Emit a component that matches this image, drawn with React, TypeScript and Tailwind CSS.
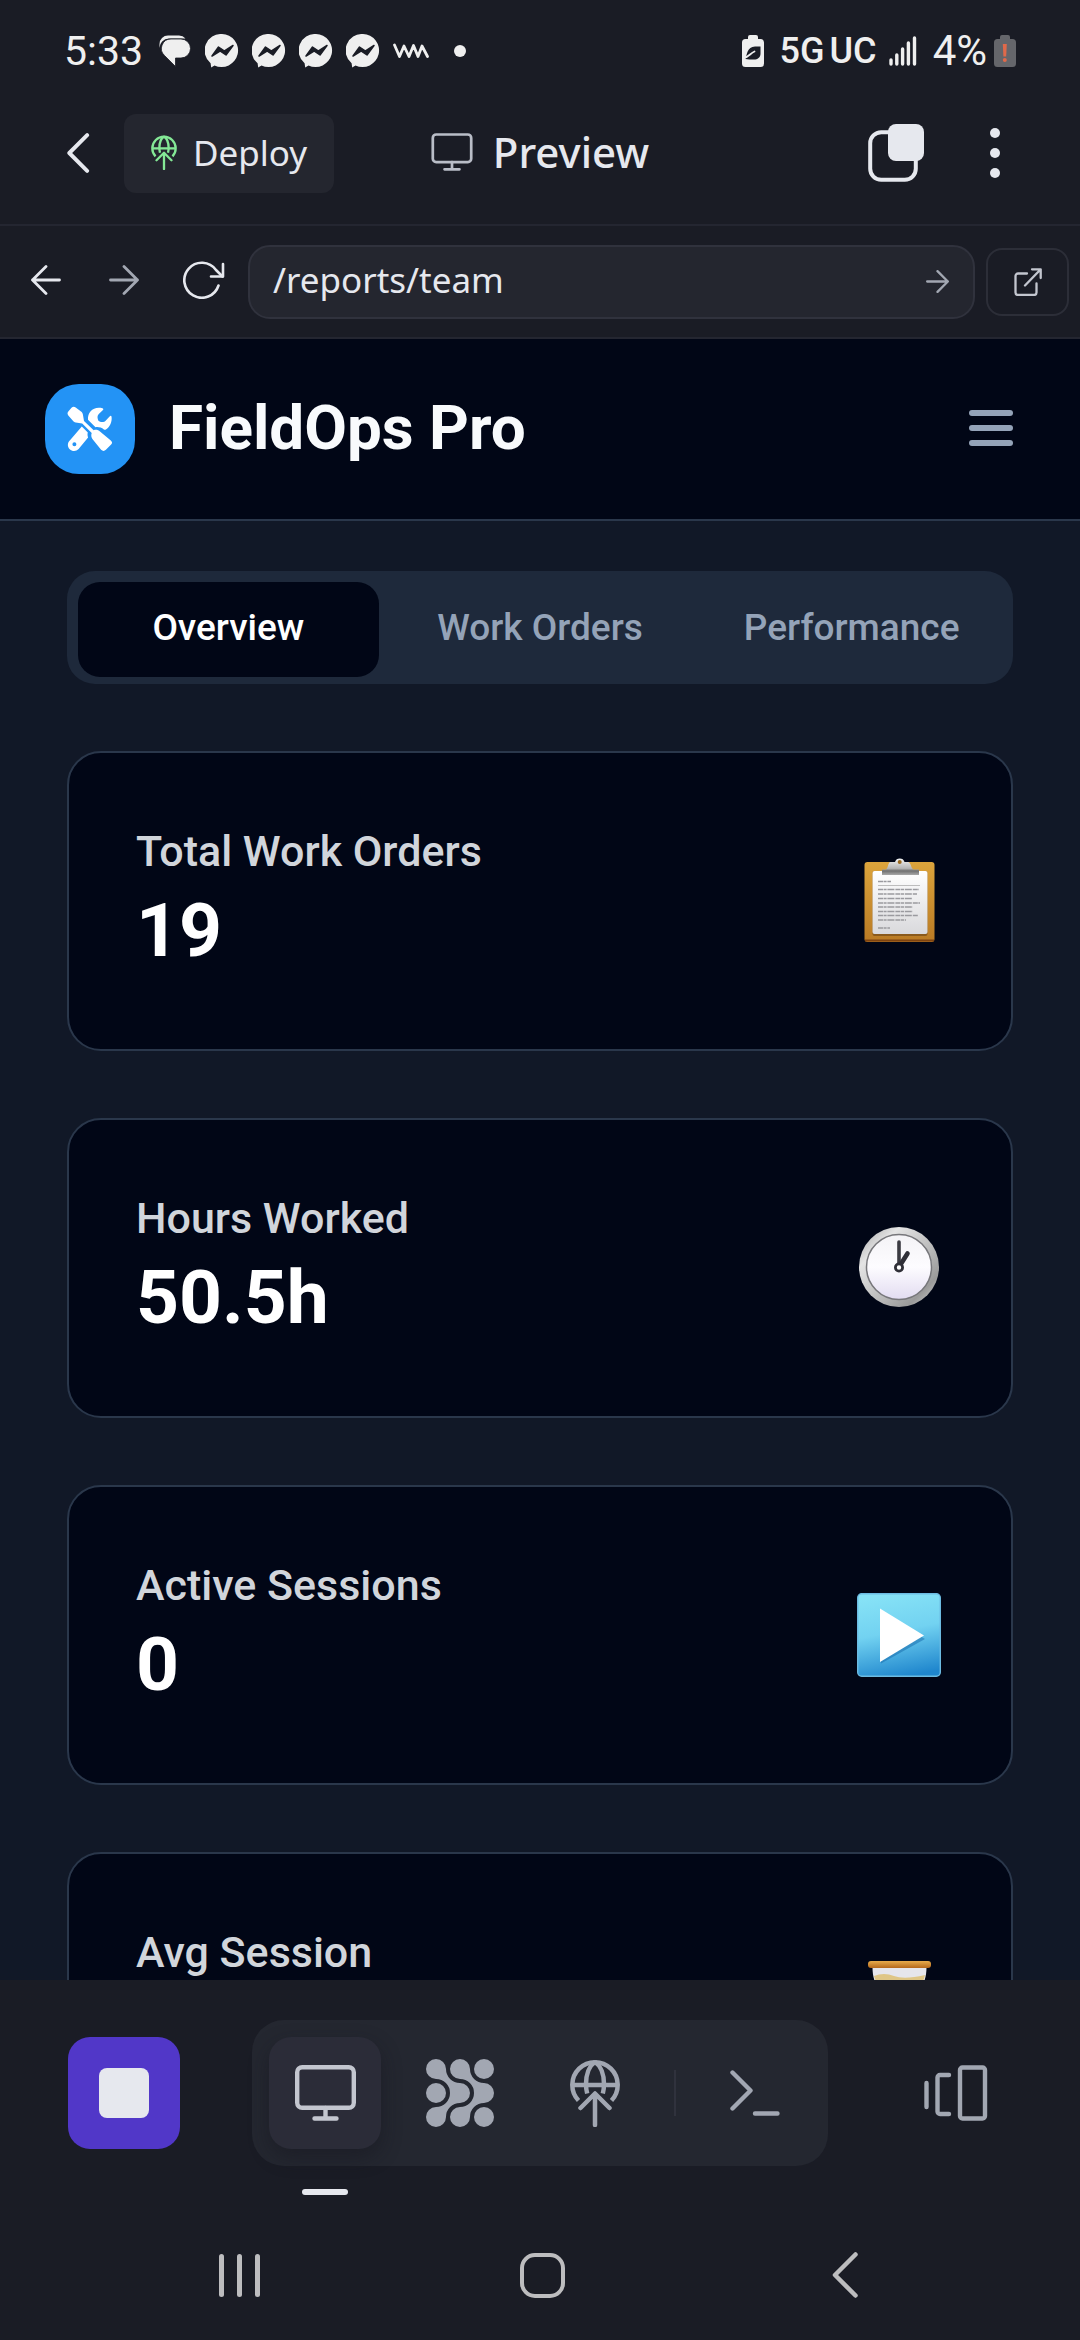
import type { ReactNode } from "react";

const MessengerIcon = () => (
  <svg viewBox="0 0 34 34" className="h-[34px] w-[34px]" aria-hidden="true">
    <path d="M17 0a16.5 16.5 0 1 1-7.5 31.4L6.200 33.600 5.600 29.200A16.500 16.500 0 0 1 17 0z" fill="#efefef" />
    <path d="M7 22l6.500-9 6 4 8.500-5.500-7 9.500-6-4z" fill="#1a1c25" stroke="#1a1c25" strokeWidth="1.500" strokeLinejoin="round" />
  </svg>
);

const ChatIcon = () => (
  <svg viewBox="0 0 32 32" className="mr-px h-8 w-8" aria-hidden="true">
    <path d="M0.500 13.500V9A8.500 8.500 0 0 1 9 0.500h11a8.500 8.500 0 0 1 6.500 3H10A9.500 9.500 0 0 0 0.500 13.500z" fill="#efefef" />
    <path d="M12 4h10a9.500 9.500 0 0 1 0 19H16.500v8.500L5.500 20.500A9.500 9.500 0 0 1 12 4z" fill="#efefef" stroke="#1a1c25" strokeWidth=".8" />
  </svg>
);

const WaveIcon = () => (
  <svg viewBox="0 0 36 18" className="h-[18px] w-9" fill="none" stroke="#efefef" strokeWidth="2.800" strokeLinejoin="round" strokeLinecap="round" aria-hidden="true">
    <path d="M1.500 3l5 11.500L11 4l5 10.500 4.500-11 4.500 11 4-10.500 5.500 10.500" />
  </svg>
);

const EcoBattery = () => (
  <svg viewBox="0 0 22 32" className="h-8 w-[22px]" aria-hidden="true">
    <path d="M6 4V2a2 2 0 0 1 2-2h6a2 2 0 0 1 2 2v2h2.500A3.500 3.500 0 0 1 22 7.500v21a3.500 3.500 0 0 1-3.500 3.500h-15A3.500 3.500 0 0 1 0 28.500v-21A3.500 3.500 0 0 1 3.500 4z" fill="#efefef" />
    <path d="M18.500 11.500v7c0 4-3 6-6.500 6H7.500L3.500 24C5 19.500 5 12 13 11.500z" fill="#1a1c25" />
    <path d="M2.500 22.500c4-.2 6-4.500 10-6" fill="none" stroke="#efefef" strokeWidth="1.800" strokeLinecap="round" />
  </svg>
);

const LowBattery = () => (
  <svg viewBox="0 0 22 32" className="h-8 w-[22px]" aria-hidden="true">
    <path d="M6 4V2a2 2 0 0 1 2-2h6a2 2 0 0 1 2 2v2h2.500A3.500 3.500 0 0 1 22 7.500v21a3.500 3.500 0 0 1-3.500 3.500h-15A3.500 3.500 0 0 1 0 28.500v-21A3.500 3.500 0 0 1 3.500 4z" fill="#65666b" />
    <path d="M8.800 9h4l-.6 12.500H9.400z" fill="#e0694a" />
    <circle cx="10.800" cy="25" r="2" fill="#e0694a" />
  </svg>
);

const SignalIcon = () => (
  <svg viewBox="0 0 28 30" className="h-[30px] w-7" stroke="#efefef" strokeWidth="3.400" strokeLinecap="round" aria-hidden="true">
    <path d="M2 24v4M7.800 19v9M13.600 13v15M19.400 7v21M25.500 2v26" />
  </svg>
);

const GlobeUp = ({ className }: { className: string }) => (
  <svg viewBox="0 0 50 68" className={className} fill="none" stroke="currentColor" strokeWidth="4.500" aria-hidden="true">
    <path d="M8.500 41.500A22.700 22.700 0 1 1 41.500 41.500" />
    <path d="M3 26h44" />
    <path d="M25 3c-6 4-9 13-9 22 0 4 .4 6.500 1.200 9.500M25 3c6 4 9 13 9 22 0 4-.4 6.500-1.200 9.500" />
    <path d="M25 35v31M10.500 49L25 34.500 39.500 49" strokeLinecap="round" strokeLinejoin="round" />
  </svg>
);

const Monitor = ({ className, stroke }: { className: string; stroke: number }) => (
  <svg viewBox="0 0 61 56" className={className} fill="none" stroke="currentColor" strokeWidth={stroke} strokeLinecap="round" aria-hidden="true">
    <rect x="2.200" y="2.200" width="56.600" height="40.600" rx="5" />
    <path d="M30.500 43v10M19.500 53.500h22" />
  </svg>
);

const Chevron = ({ className }: { className: string }) => (
  <svg viewBox="0 0 26 46" className={className} fill="none" stroke="currentColor" strokeWidth="4.500" strokeLinecap="round" strokeLinejoin="round" aria-hidden="true">
    <path d="M23.500 2.500L3 23l20.500 20.500" />
  </svg>
);

const Arrow = ({ className, flip = false, stroke = 2.8 }: { className: string; flip?: boolean; stroke?: number }) => (
  <svg viewBox="0 0 30 30" className={className} fill="none" stroke="currentColor" strokeWidth={stroke} strokeLinecap="round" strokeLinejoin="round" aria-hidden="true">
    {flip ? <path d="M28.500 15H1.500M15 1.500L1.500 15 15 28.500" /> : <path d="M1.500 15h27M15 1.500L28.500 15 15 28.500" />}
  </svg>
);

const Reload = () => (
  <svg viewBox="0 0 42 38" className="h-[38px] w-[42px]" fill="none" stroke="#e6e8ee" strokeWidth="2.600" strokeLinecap="round" strokeLinejoin="round" aria-hidden="true">
    <path d="M35.500 24.500A17.500 17.500 0 1 1 33 9l6.500 6.500" />
    <path d="M40 3v12.500H28" />
  </svg>
);

const ExternalIcon = () => (
  <svg viewBox="0 0 28 28" className="h-7 w-7" fill="none" stroke="#c3c6cf" strokeWidth="2.300" strokeLinecap="round" strokeLinejoin="round" aria-hidden="true">
    <path d="M13 5.500H4a2.500 2.500 0 0 0-2.500 2.500v16.500A2.500 2.500 0 0 0 4 27h16a2.500 2.500 0 0 0 2.500-2.500V15.500" />
    <path d="M11 17.500L26.500 1.500M18 1.300h8.700V10" />
  </svg>
);

const ToolsIcon = () => (
  <svg viewBox="7 6 46 46" className="h-[46px] w-[46px]" fill="#fff" aria-hidden="true">
    <path d="M11.500 7.800c1.400-1.300 2.600-1.400 4.200-.3l5.300 4.100c1 .8 1.600 1.600 1.900 2.800l1.100 6.600 9.700 9.200c2.200-.7 4.600-.3 6.300 1.300l10.500 8.700c2 1.700 2 2.900.4 4.600l-5 5c-1.500 1.500-3.200 1.500-4.800 0L33 39.800c-1.700-1.800-2.200-4.200-1.300-6.700l-9.500-9.500-6.500-1c-1.300-.3-2.200-.9-3-2L8.300 15.500c-1.100-1.600-1-2.800.2-4.200z" />
    <path d="M42.500 8.200c1.200.5 1 1.300.2 2.100l-3.900 3.800c-1.600 1.700-1.500 3.400-.8 5.700.3 1 1 1.600 2 1.900 2.300.6 4 .6 5.600-1l4-4.300c.9-.9 1.800-.8 2 .5.500 5.200-1.700 10-5.700 12.600-.7.500-1.300.4-2-.1-2.600-1.900-5.200-2.600-8.400-2.200L28 19.800C27.500 12 33.500 6 42.500 8.200z" />
    <path fillRule="evenodd" d="M21.800 26.400l6 6c-.5 1.600-.3 3.200.3 5L18.600 49c-2.400 2.600-6.400 2.600-8.900.2-2.500-2.500-2.400-6.400.3-8.900zM14.400 42.200a2 2 0 1 0 0 4 2 2 0 0 0 0-4z" />
  </svg>
);

const SquaresIcon = () => (
  <svg viewBox="0 0 56 58" className="h-[58px] w-14" aria-hidden="true">
    <rect x="2.200" y="8.200" width="45.600" height="47.600" rx="11" fill="none" stroke="#e6e8ee" strokeWidth="4" />
    <rect x="20" y="0" width="36" height="37" rx="8" fill="#e6e8ee" />
  </svg>
);

const BlobIcon = () => (
  <svg viewBox="0 0 68 68" className="h-[68px] w-[68px]" fill="currentColor" aria-hidden="true">
    <path d="M20 10A14 14 0 0 0 34 24A10 10 0 0 1 34 44A14 14 0 0 0 20 58A10 10 0 1 1 10 48A14 14 0 0 0 10 20A10 10 0 1 1 20 10z" />
    <path d="M44 10A14 14 0 0 0 58 24A10 10 0 0 1 58 44A14 14 0 0 0 44 58A10 10 0 1 1 34 48A14 14 0 0 0 34 20A10 10 0 1 1 44 10z" />
    <circle cx="10" cy="34" r="10" />
    <circle cx="58" cy="10" r="10" />
    <circle cx="58" cy="58" r="10" />
  </svg>
);

const TerminalIcon = () => (
  <svg viewBox="0 0 50 46" className="h-[46px] w-[50px]" fill="none" stroke="currentColor" strokeWidth="4.400" strokeLinecap="round" strokeLinejoin="round" aria-hidden="true">
    <path d="M2.500 2.500L20.500 20.500 2.500 38.500M25 43.500h22.500" />
  </svg>
);

const CarouselIcon = () => (
  <svg viewBox="0 0 64 56" className="h-14 w-16" fill="none" stroke="#a2a7b2" strokeWidth="4.400" strokeLinecap="round" strokeLinejoin="round" aria-hidden="true">
    <path d="M2.500 18v24M25 10h-9a2.500 2.500 0 0 0-2.500 2.500v34A2.500 2.500 0 0 0 16 49h9" />
    <rect x="36" y="2.500" width="25" height="51" rx="2.500" />
  </svg>
);

const ClipboardEmoji = () => (
  <svg viewBox="0 1 84 84" className="h-[84px] w-[84px] overflow-visible" role="img" aria-label="Clipboard">
    <defs>
      <linearGradient id="board" x1="0" y1="0" x2="0" y2="1">
        <stop offset="0" stopColor="#dca43c" />
        <stop offset="1" stopColor="#b97a24" />
      </linearGradient>
      <linearGradient id="sheet" x1="0" y1="0" x2="0" y2="1">
        <stop offset="0" stopColor="#ffffff" />
        <stop offset="1" stopColor="#d9d9dc" />
      </linearGradient>
      <linearGradient id="clip" x1="0" y1="0" x2="0" y2="1">
        <stop offset="0" stopColor="#f3f3f3" />
        <stop offset=".6" stopColor="#b5b5b5" />
        <stop offset=".75" stopColor="#6f6f6f" />
        <stop offset="1" stopColor="#a9a9a9" />
      </linearGradient>
    </defs>
    <rect x="7.500" y="4" width="70" height="80" rx="3" fill="url(#board)" />
    <path d="M8 82.500h69" stroke="#7e4310" strokeWidth="2" />
    <rect x="15.500" y="13" width="55" height="65" rx="2" fill="#8a5a1c" />
    <rect x="15.500" y="13" width="55" height="63" rx="2" fill="url(#sheet)" />
    <path fill="url(#clip)" d="M25 17v-5.500h3.500C31 11.500 31 4 33.500 4H38a5 5 0 0 1 9.500 0H51c3 0 3 7.500 6 7.500h5V17z" />
    <circle cx="42.700" cy="4" r="2" fill="#9a6a20" />
    <path d="M21 27.500h42" stroke="#bdbdbd" strokeWidth="1" />
    <g stroke="#9a9a9f" strokeWidth="1.500" strokeDasharray="5 .6 3 .8 7 1">
      <path d="M21 23.500h13M21 31.500h41M21 36h39M21 40.500h34M21 45h42M21 49h35M21 53.500h35M21 57.500h40M21 62h28M21 70h12" />
    </g>
  </svg>
);

const ClockEmoji = () => (
  <svg viewBox="0 0 84 84" className="h-[84px] w-[84px]" role="img" aria-label="One o'clock">
    <defs>
      <linearGradient id="rim" x1="0" y1="0" x2="1" y2="1">
        <stop offset="0" stopColor="#a2a2a2" />
        <stop offset=".25" stopColor="#e4e4e4" />
        <stop offset=".6" stopColor="#b8b8b8" />
        <stop offset=".8" stopColor="#9a9a9a" />
        <stop offset="1" stopColor="#dcdcdc" />
      </linearGradient>
      <linearGradient id="face" x1="0" y1="0" x2="0" y2="1">
        <stop offset="0" stopColor="#f4f3f6" />
        <stop offset=".5" stopColor="#fdfcff" />
        <stop offset="1" stopColor="#e2dcf1" />
      </linearGradient>
    </defs>
    <circle cx="42" cy="41" r="40" fill="url(#rim)" />
    <circle cx="42" cy="41" r="32.500" fill="url(#face)" stroke="#77777b" strokeWidth="1.500" />
    <path d="M42 41V16" stroke="#3b3b42" strokeWidth="3.600" strokeLinecap="round" />
    <path d="M42 41l8.500-13.500" stroke="#303038" strokeWidth="4.600" strokeLinecap="round" />
    <circle cx="42" cy="41.500" r="3.600" fill="#fff" stroke="#303038" strokeWidth="2.800" />
  </svg>
);

const PlayEmoji = () => (
  <svg viewBox="0 0 84 84" className="h-[84px] w-[84px]" role="img" aria-label="Play">
    <defs>
      <linearGradient id="sky" x1=".4" y1="0" x2=".6" y2="1">
        <stop offset="0" stopColor="#86e2f6" />
        <stop offset=".45" stopColor="#72d2f1" />
        <stop offset="1" stopColor="#1f86cd" />
      </linearGradient>
    </defs>
    <rect x=".7" y=".7" width="82.600" height="82.600" rx="4" fill="url(#sky)" stroke="#6cbbe2" strokeWidth="1.400" />
    <path d="M24 18l44 28-44 24.500z" fill="#1c6fae" opacity=".55" />
    <path d="M23 15.500l44 27-44 26.500z" fill="#fff" />
  </svg>
);

const HourglassEmoji = () => (
  <svg viewBox="0 0 84 84" className="h-[84px] w-[84px]" role="img" aria-label="Hourglass">
    <defs>
      <linearGradient id="wood" x1="0" y1="0" x2="0" y2="1">
        <stop offset="0" stopColor="#e8ac4c" />
        <stop offset="1" stopColor="#b5681b" />
      </linearGradient>
    </defs>
    <path d="M15.500 7h54c0 18-8 26-20 35 12 9 20 17 20 35h-54c0-18 8-26 20-35-12-9-20-17-20-35z" fill="#e6e6ec" />
    <path d="M17 16q10-4 20 0t31-1c-2 11-13 21-25.500 25C30 36 20 27 17 16z" fill="#dfc686" />
    <rect x="11" y="1" width="63" height="7" rx="3" fill="url(#wood)" />
    <rect x="11" y="76" width="63" height="7" rx="3" fill="url(#wood)" />
  </svg>
);

const stats: { label: string; value?: string; icon: ReactNode }[] = [
  { label: "Total Work Orders", value: "19", icon: <ClipboardEmoji /> },
  { label: "Hours Worked", value: "50.5h", icon: <ClockEmoji /> },
  { label: "Active Sessions", value: "0", icon: <PlayEmoji /> },
  { label: "Avg Session", icon: <HourglassEmoji /> },
];

const StatusBar = () => (
  <div className="flex h-[100px] items-center justify-between px-16 pt-[2px] text-[#efefef]">
    <div className="flex items-center gap-4">
      <span className="text-[41px] leading-none">5:33</span>
      <div className="flex items-center gap-[13px]">
        <ChatIcon />
        <MessengerIcon />
        <MessengerIcon />
        <MessengerIcon />
        <MessengerIcon />
        <WaveIcon />
        <span className="ml-3 size-3 rounded-full bg-[#efefef]" />
      </div>
    </div>
    <div className="flex items-center gap-4">
      <EcoBattery />
      <div className="flex items-center gap-3">
        <span className="flex gap-[5px] text-[36px] leading-none font-medium">
          <span>5G</span>
          <span>UC</span>
        </span>
        <SignalIcon />
      </div>
      <div className="flex items-center gap-[7px]">
        <span className="text-[42px] leading-none">4%</span>
        <LowBattery />
      </div>
    </div>
  </div>
);

const WorkspaceHeader = () => (
  <header className="relative flex h-[126px] items-center justify-between border-b-2 border-[#242631] pr-[70px] pb-[18px] pl-16 text-[#e6e8ee]">
    <div className="flex items-center gap-8">
      <button type="button" aria-label="Back" className="flex w-7 justify-center">
        <Chevron className="h-10 w-6" />
      </button>
      <button type="button" className="flex h-[79px] items-center gap-4 rounded-xl bg-[#24262f] px-[27px] pb-[2px] font-['Noto_Sans'] text-[35px] leading-none">
        <GlobeUp className="h-[35px] w-[26px] text-[#84e896]" />
        Deploy
      </button>
    </div>
    <h1 className="absolute inset-x-0 top-0 mx-auto flex h-[104px] w-fit items-center gap-5 font-['Noto_Sans'] text-[42px] leading-none font-medium">
      <Monitor className="h-[38px] w-[42px] text-[#b9bdc7]" stroke={4} />
      Preview
    </h1>
    <div className="flex items-center gap-14">
      <button type="button" aria-label="Windows" className="flex"><SquaresIcon /></button>
      <button type="button" aria-label="More options" className="flex w-[30px] flex-col items-center gap-[10px]">
        <span className="size-[10px] rounded-full bg-[#e6e8ee]" />
        <span className="size-[10px] rounded-full bg-[#e6e8ee]" />
        <span className="size-[10px] rounded-full bg-[#e6e8ee]" />
      </button>
    </div>
  </header>
);

const AddressBar = () => (
  <div className="flex h-[113px] items-center border-b-2 border-[#242631] pr-[11px]">
    <div className="flex w-[248px] items-center pb-1 pl-[6px]">
      <button type="button" aria-label="Go back" className="flex w-20 justify-center text-[#e6e8ee]"><Arrow className="h-[30px] w-[30px]" flip /></button>
      <button type="button" aria-label="Go forward" className="flex w-[76px] justify-center text-[#a2a7b2]"><Arrow className="h-[30px] w-[30px]" /></button>
      <button type="button" aria-label="Reload" className="flex w-[84px] justify-center"><Reload /></button>
    </div>
    <form className="flex h-[74px] min-w-0 flex-1 items-center rounded-[22px] border-2 border-[#30323d] bg-[#24262f] pr-6 pl-[23px]" onSubmit={(event) => event.preventDefault()}>
      <input aria-label="Page path" defaultValue="/reports/team" className="min-w-0 flex-1 bg-transparent pb-[2px] font-['Noto_Sans'] text-[35px] text-[#e6e8ee] outline-none" />
      <button type="submit" aria-label="Go" className="flex text-[#a2a7b2]"><Arrow className="size-[23px]" stroke={3} /></button>
    </form>
    <button type="button" aria-label="Open in new tab" className="ml-[11px] flex h-[68px] w-[83px] items-center justify-center rounded-2xl border-2 border-[#2c2e38]">
      <ExternalIcon />
    </button>
  </div>
);

const tabs = ["Overview", "Work Orders", "Performance"];

const Preview = () => (
  <div className="flex min-h-0 flex-1 flex-col overflow-hidden bg-[#111827]">
    <header className="flex h-[182px] shrink-0 items-center justify-between border-b-2 border-[#2a374b] bg-[#010616] pr-[67px] pl-[45px]">
      <div className="flex items-center gap-[34px]">
        <span className="flex size-[90px] items-center justify-center rounded-[34px] bg-[#2393f5]"><ToolsIcon /></span>
        <span className="pb-[2px] text-[62px] leading-none font-bold text-[#f8fafc]">FieldOps Pro</span>
      </div>
      <button type="button" aria-label="Menu" className="flex w-11 flex-col gap-[9px] pb-[2px]">
        <span className="h-[6px] rounded-full bg-[#94a3b8]" />
        <span className="h-[6px] rounded-full bg-[#94a3b8]" />
        <span className="h-[6px] rounded-full bg-[#94a3b8]" />
      </button>
    </header>
    <main className="flex flex-col gap-[67px] px-[67px] pt-[50px]">
      <div role="tablist" className="grid h-[113px] grid-cols-3 gap-[11px] rounded-[28px] bg-[#1e293b] px-[11px] pt-[11px] pb-[7px]">
        {tabs.map((tab, index) => (
          <button
            key={tab}
            type="button"
            role="tab"
            aria-selected={index === 0}
            className={
              index === 0
                ? "rounded-[22px] bg-[#010616] pb-1 text-[37px] font-medium text-white"
                : "rounded-[22px] pb-1 text-[37px] font-medium text-[#94a3b8]"
            }
          >
            {tab}
          </button>
        ))}
      </div>
      {stats.map((stat) => (
        <section key={stat.label} className="flex h-[300px] shrink-0 items-center justify-between rounded-[34px] border-2 border-[#2a374b] bg-[#010616] pr-[70px] pl-[67px]">
          <div className="pt-[2px]">
            <p className="text-[43px] leading-[56px] font-medium text-[#d1d5db]">{stat.label}</p>
            <p className="h-[102px] text-[75px] leading-[102px] font-bold text-white">{stat.value}</p>
          </div>
          {stat.icon}
        </section>
      ))}
    </main>
  </div>
);

const toolButton = "flex size-[112px] items-center justify-center rounded-[22px]";

const Toolbar = () => (
  <nav aria-label="Workspace" className="flex h-[230px] items-start justify-between px-[68px] pt-10 text-[#a2a7b2]">
    <button type="button" aria-label="Stop" className="mt-[17px] flex size-[112px] items-center justify-center rounded-[22px] bg-[#5137c8]">
      <span className="size-[50px] rounded-lg bg-[#e6e8ee]" />
    </button>
    <div className="flex items-center gap-[23px] rounded-[32px] bg-[#242730] p-[17px]">
      <div className="relative">
        <button type="button" aria-label="Preview" aria-pressed="true" className="flex size-[112px] items-center justify-center rounded-[22px] bg-[#2b2c38] text-[#c3c6cf] shadow-[0_8px_20px_rgba(20,20,28,0.45)]">
          <Monitor className="h-14 w-[61px]" stroke={4.4} />
        </button>
        <span className="absolute -bottom-[46px] left-1/2 h-[6px] w-[46px] -translate-x-1/2 rounded-full bg-[#e6e8ee]" />
      </div>
      <button type="button" aria-label="Agent" className={toolButton}><BlobIcon /></button>
      <button type="button" aria-label="Deployments" className={toolButton}><GlobeUp className="h-[68px] w-[50px]" /></button>
      <span className="h-[46px] w-[2px] bg-[#30323d]" />
      <button type="button" aria-label="Shell" className={toolButton}><TerminalIcon /></button>
    </div>
    <button type="button" aria-label="Tabs" className="mt-[17px] flex size-[112px] items-center justify-center"><CarouselIcon /></button>
  </nav>
);

const SystemNav = () => (
  <nav aria-label="System" className="flex h-[130px] items-start justify-center gap-[201px] pt-10 pl-1 text-[#bdbdbf]">
    <button type="button" aria-label="Recents" className="flex w-[102px] justify-center gap-[13px] pt-1">
      <span className="h-[43px] w-[5px] rounded-full bg-[#bdbdbf]" />
      <span className="h-[43px] w-[5px] rounded-full bg-[#bdbdbf]" />
      <span className="h-[43px] w-[5px] rounded-full bg-[#bdbdbf]" />
    </button>
    <button type="button" aria-label="Home" className="flex w-[102px] justify-center pt-[3px]">
      <span className="size-[45px] rounded-[15px] border-4 border-[#bdbdbf]" />
    </button>
    <button type="button" aria-label="Back" className="flex w-[102px] justify-center pt-[2px]">
      <Chevron className="h-[46px] w-[26px]" />
    </button>
  </nav>
);

export default function App() {
  return (
    <div className="flex h-screen flex-col overflow-hidden bg-[#1a1c25] font-['Roboto',sans-serif]">
      <StatusBar />
      <WorkspaceHeader />
      <AddressBar />
      <Preview />
      <Toolbar />
      <SystemNav />
    </div>
  );
}
